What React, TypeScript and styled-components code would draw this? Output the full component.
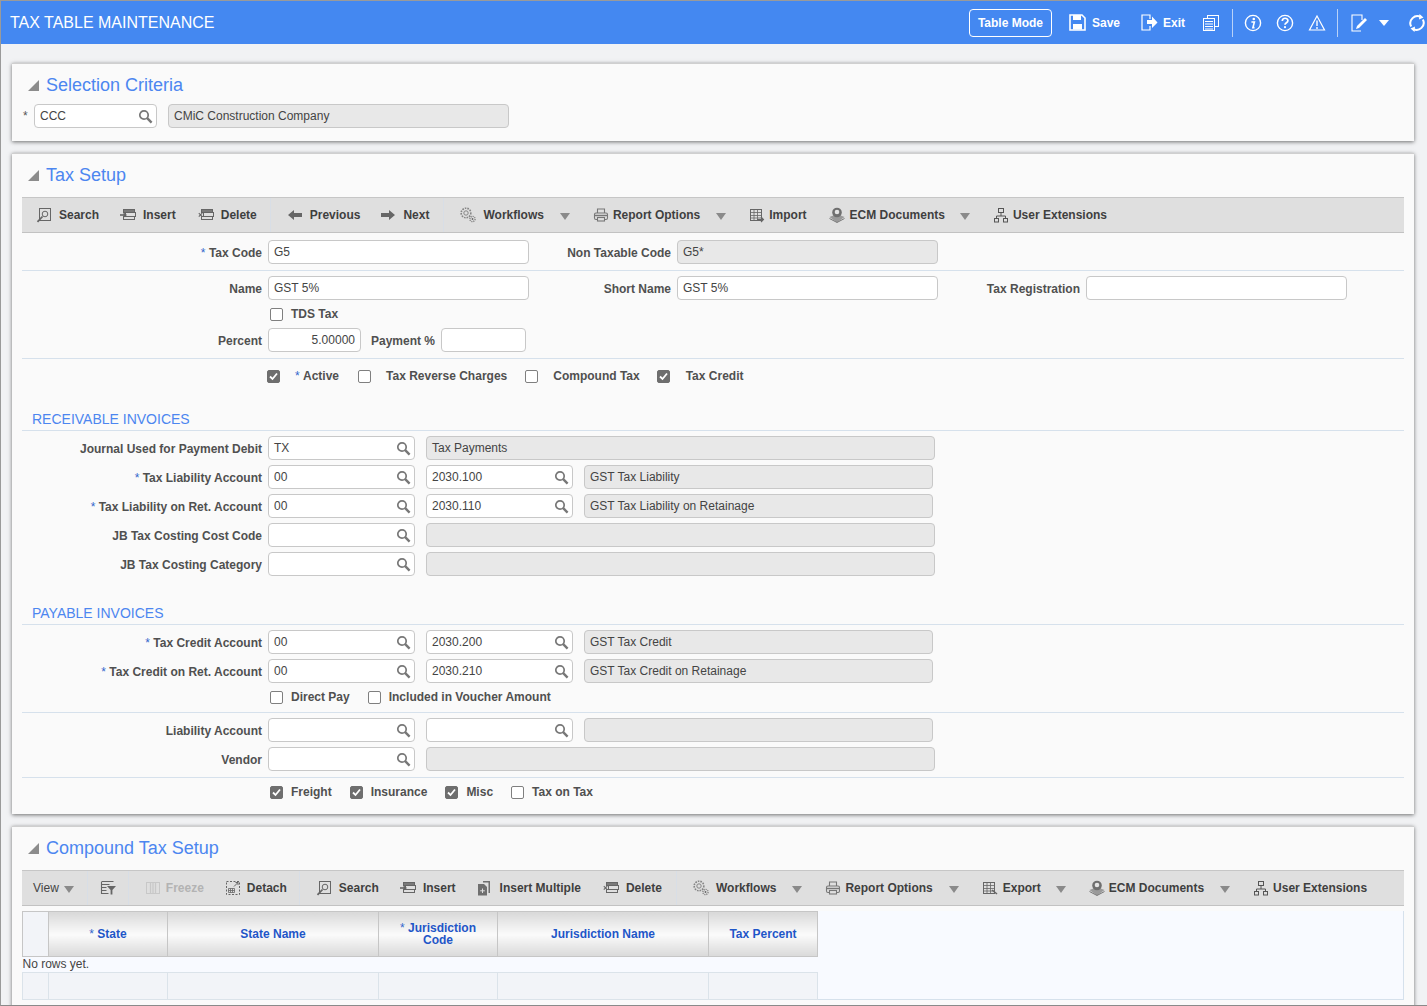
import React from "react";
import styled, { createGlobalStyle } from "styled-components";

const Global = createGlobalStyle`
  html, body { margin: 0; padding: 0; background: #f1f2f4; }
  body { font-family: "Liberation Sans", Arial, sans-serif; font-size: 12px; color: #333; }
`;

const Frame = styled.div`
  box-sizing: border-box;
  width: 1427px;
  height: 1006px;
  overflow: hidden;
  border-top: 1px solid #9a9a9a;
  border-left: 1px solid #9a9a9a;
  border-bottom: 1px solid #8a8a8a;
  background: #f1f2f4;
`;

const TopBar = styled.header`
  height: 43px;
  background: #4488f1;
  display: flex;
  align-items: center;
  color: #fff;
  padding: 0 1px 0 9px;
`;
const AppTitle = styled.h1`
  margin: 0;
  font-size: 16px;
  font-weight: 400;
  flex: 1;
`;
const TopActions = styled.div`
  display: flex;
  align-items: center;
  flex: none;
  height: 100%;
`;
const ModeButton = styled.button`
  box-sizing: border-box;
  width: 83px;
  height: 28px;
  margin-right: 17px;
  padding: 0;
  background: transparent;
  border: 1px solid #fff;
  border-radius: 4px;
  color: #fff;
  font: 700 12px "Liberation Sans", Arial, sans-serif;
`;
const TopAction = styled.span<{ $mr: number; $gap: number }>`
  display: flex;
  align-items: center;
  gap: ${(p) => p.$gap}px;
  margin-right: ${(p) => p.$mr}px;
  font-weight: 700;
  color: #fff;
`;
const TopIcon = styled.svg<{ $mr: number }>`
  flex: none;
  width: 18px;
  height: 18px;
  margin-right: ${(p) => p.$mr}px;
`;
const TopSep = styled.span<{ $mr: number }>`
  width: 1px;
  height: 28px;
  background: #b9d2f8;
  margin-right: ${(p) => p.$mr}px;
`;
const TopCaret = styled.span`
  width: 0;
  height: 0;
  margin: 0 19px 0 11px;
  border-left: 5px solid transparent;
  border-right: 5px solid transparent;
  border-top: 6px solid #fff;
`;

const Content = styled.main`
  padding: 19px 13px 0 11px;
  display: flex;
  flex-direction: column;
  gap: 12px;
`;
const Card = styled.section`
  background: #fafafa;
  border-top: 1px solid #cfcfcf;
  box-shadow: 0 1px 4px rgba(0, 0, 0, 0.55);
  padding: 9px 10px 0;
`;
const CardTitle = styled.h2`
  margin: 0;
  height: 24px;
  display: flex;
  align-items: center;
  gap: 7px;
  padding-left: 6px;
  font-size: 18px;
  font-weight: 400;
  color: #4c86f0;
`;
const Disclosure = styled.span`
  width: 0;
  height: 0;
  border-left: 11px solid transparent;
  border-bottom: 11px solid #8c8c8c;
`;
const Body1 = styled.div`
  padding-bottom: 13px;
`;
const Body2 = styled.div`
  padding-bottom: 14px;
`;
const Body3 = styled.div`
  padding-bottom: 30px;
`;

const Toolbar = styled.div<{ $pl?: number }>`
  box-sizing: border-box;
  height: 36px;
  margin-top: 10px;
  background: #dfdfdf;
  border-top: 1px solid #c6c6c6;
  border-bottom: 1px solid #c2c2c2;
  display: flex;
  align-items: center;
  padding-left: ${(p) => p.$pl ?? 3}px;
`;
const ToolButton = styled.span<{ $gap?: number; $off?: boolean; $pr?: number }>`
  display: flex;
  align-items: center;
  gap: ${(p) => p.$gap ?? 7}px;
  padding: 0 ${(p) => p.$pr ?? 11}px 0 11px;
  font-weight: 700;
  white-space: nowrap;
  color: ${(p) => (p.$off ? "#b3b3b3" : "#3f3f3f")};
`;
const ToolSep = styled.span<{ $ml?: number; $mr?: number }>`
  width: 1px;
  height: 34px;
  margin: 0 ${(p) => p.$mr ?? 5}px 0 ${(p) => p.$ml ?? 4}px;
  background: #d8dee6;
`;
const ToolCaret = styled.span`
  width: 0;
  height: 0;
  margin: 2px 12px 0 5px;
  border-left: 5px solid transparent;
  border-right: 5px solid transparent;
  border-top: 7px solid #8a8a8a;
`;
const ToolSvg = styled.svg`
  flex: none;
  width: 16px;
  height: 16px;
`;

const Row = styled.div<{ $mt?: number }>`
  display: flex;
  align-items: center;
  height: 24px;
  margin-top: ${(p) => p.$mt ?? 5}px;
`;
const CheckRow = styled.div<{ $mt?: number; $pl: number; $h?: number }>`
  display: flex;
  align-items: center;
  height: ${(p) => p.$h ?? 16}px;
  margin-top: ${(p) => p.$mt ?? 6}px;
  padding-left: ${(p) => p.$pl}px;
`;
const Label = styled.label<{ $w: number }>`
  box-sizing: border-box;
  flex: none;
  width: ${(p) => p.$w}px;
  padding: 1px 6px 0 0;
  text-align: right;
  font-weight: 700;
  color: #505050;
  white-space: nowrap;
`;
const Req = styled.span`
  color: #3366cc;
  font-weight: 400;
`;
const Star = styled.span`
  flex: none;
  width: 11px;
  margin-left: 1px;
  text-align: left;
  color: #555;
`;
const Input = styled.div<{ $w: number; $right?: boolean; $off?: boolean; $ml?: number }>`
  box-sizing: border-box;
  flex: none;
  width: ${(p) => p.$w}px;
  height: 24px;
  margin-left: ${(p) => p.$ml ?? 0}px;
  padding: 0 5px;
  display: flex;
  align-items: center;
  justify-content: ${(p) => (p.$right ? "flex-end" : "space-between")};
  background: ${(p) => (p.$off ? "#e8e8e8" : "#fff")};
  border: 1px solid #c8c8c8;
  border-radius: 4px;
  color: #444;
`;
const Lens = styled.svg`
  flex: none;
  width: 15px;
  height: 15px;
  margin-right: -2px;
`;
const CheckGroup = styled.label<{ $mr: number; $gap?: number }>`
  display: flex;
  align-items: center;
  gap: ${(p) => p.$gap ?? 8}px;
  margin-right: ${(p) => p.$mr}px;
  font-weight: 700;
  color: #505050;
  white-space: nowrap;
`;
const Box = styled.span<{ $on?: boolean }>`
  box-sizing: border-box;
  flex: none;
  width: 13px;
  height: 13px;
  display: flex;
  align-items: center;
  justify-content: center;
  border: 1px solid ${(p) => (p.$on ? "#6e6e6e" : "#7f7f7f")};
  border-radius: 2px;
  background: ${(p) => (p.$on ? "#6e6e6e" : "#fff")};
`;
const Divider = styled.div<{ $mt: number }>`
  height: 1px;
  margin-top: ${(p) => p.$mt}px;
  background: #d6e1ec;
`;
const SectionHead = styled.h3<{ $mt: number }>`
  box-sizing: content-box;
  margin: ${(p) => p.$mt}px 0 0;
  height: 22px;
  line-height: 22px;
  padding-left: 10px;
  border-bottom: 1px solid #d6e1ec;
  font-size: 14px;
  font-weight: 400;
  color: #4c86f0;
`;

const GridPanel = styled.div`
  margin-top: 5px;
  height: 88px;
  background: #f8faff;
  border-right: 1px solid #d6e1ec;
  border-bottom: 1px solid #d6e1ec;
`;
const Table = styled.table`
  table-layout: fixed;
  width: 795px;
  border-collapse: collapse;
`;
const Th = styled.th<{ $w: number }>`
  width: ${(p) => p.$w}px;
  height: 45px;
  padding: 0 12px;
  box-sizing: border-box;
  border: 1px solid #c6c6c6;
  background: linear-gradient(#d9d9d9, #fbfbfb 50%, #d9d9d9);
  color: #1f56c8;
  font-size: 12px;
  line-height: 12px;
  font-weight: 700;
  text-align: center;
`;
const CornerTh = styled(Th)`
  background: #f2f4f8;
`;
const NoRows = styled.td`
  height: 15px;
  padding: 0;
  line-height: 15px;
  color: #444;
`;
const Td = styled.td`
  height: 26px;
  padding: 0;
  background: #f2f4f8;
  border: 1px solid #dbe3ea;
`;
const ViewLabel = styled.span`
  padding-left: 10px;
  color: #444;
`;
const IconOnly = styled.span`
  display: flex;
  padding: 0 12px;
`;

const S = "#666";
const paths: Record<string, React.ReactNode> = {
  search: (
    <g fill="none" stroke={S}>
      <rect x="3.5" y="1.5" width="11" height="12" />
      <circle cx="9" cy="7" r="2.8" />
      <path d="M6.5 9.5 1.5 14.8" strokeWidth="1.8" />
    </g>
  ),
  insert: (
    <g fill="none" stroke={S}>
      <rect x="3.5" y="2.5" width="11" height="3" fill="#7a7a7a" />
      <rect x="5.5" y="5.5" width="10" height="4" />
      <rect x="3.5" y="9.5" width="11" height="3" />
      <path d="M0 8h5" strokeWidth="1.6" />
      <path d="M3.5 5.2 7 8l-3.5 2.8z" fill={S} stroke="none" />
    </g>
  ),
  del: (
    <g fill="none" stroke={S}>
      <rect x="3.5" y="2.5" width="11" height="3" fill="#7a7a7a" />
      <rect x="5.5" y="5.5" width="10" height="4" />
      <rect x="3.5" y="9.5" width="11" height="3" />
      <path d="m.8 6.2 3.4 3.4m0-3.4L.8 9.6" strokeWidth="1.1" />
    </g>
  ),
  prev: <path d="M1 8 7 3v3h8v4H7v3z" fill={S} />,
  next: <path d="M15 8 9 3v3H1v4h8v3z" fill={S} />,
  gears: (
    <g fill="none" stroke="#858585">
      <circle cx="6" cy="6" r="4.8" strokeWidth="1.6" strokeDasharray="1.6 1" />
      <circle cx="6" cy="6" r="2.2" />
      <circle cx="12.5" cy="12" r="2.6" strokeWidth="1.4" strokeDasharray="1.2 .8" />
      <circle cx="12.5" cy="12" r=".9" fill={S} stroke="none" />
    </g>
  ),
  print: (
    <g fill="none" stroke="#777" strokeWidth="1.1">
      <path d="M4.5 6V2h7v4" />
      <rect x="1.5" y="6" width="13" height="6.5" rx="1.5" />
      <path d="M2 8.5h12" strokeWidth="1.4" />
      <rect x="4.5" y="10.5" width="7" height="3.5" fill="#dfdfdf" />
    </g>
  ),
  importT: (
    <g fill="none" stroke={S}>
      <rect x="1.5" y="2.5" width="11" height="11" />
      <path d="M1.5 5.5h11M1.5 8.5h11M1.5 11h11M5 3v10M8.5 3v10" strokeWidth=".8" />
      <path d="M8 12.5h6M12 10l2.5 2.5L12 15" strokeWidth="1.1" />
    </g>
  ),
  ecm: (
    <g>
      <path d="M.5 10 8 7l7.5 3L8 15.5z" fill="#9a9a9a" />
      <path d="M.5 11.5 8 15.5l7.5-4" fill="none" stroke="#777" />
      <circle cx="8" cy="5.5" r="4.8" fill="#6f6f6f" />
      <circle cx="8" cy="5" r="2.3" fill="#e3e3e3" />
    </g>
  ),
  org: (
    <g fill="none" stroke="#555">
      <rect x="5.5" y="1.5" width="5" height="4" />
      <rect x="1.5" y="11.5" width="4" height="3.5" />
      <rect x="10.5" y="11.5" width="4" height="3.5" />
      <path d="M8 5.5V9M3.5 11.5V9h9v2.5" />
    </g>
  ),
  filter: (
    <g fill="none" stroke={S}>
      <path d="M1.5 1.5h12M1.5 4.5h8M1.5 7.5h5M1.5 10.5h5M1.5 13.5h7M1.5 2v12" strokeWidth="1.1" />
      <path d="M7 6h9l-3.6 4v4.5h-1.8V10z" fill={S} stroke="none" />
    </g>
  ),
  freeze: (
    <g fill="none" stroke="#c8c8c8">
      <rect x="1.5" y="2.5" width="13" height="11" />
      <path d="M5.5 3v10M8 3v10M10.5 3v10" strokeWidth="1.3" />
    </g>
  ),
  detach: (
    <g fill="none" stroke={S}>
      <rect x="1.5" y="1.5" width="13" height="13" strokeDasharray="2 1.5" />
      <path d="M9 6.5 13 2.5M10.5 2.5H13V5" />
      <path d="M3.5 8.5h6v4h-6zM3.5 10.5h6M5.5 8.5v4M7.5 8.5v4" strokeWidth=".8" />
    </g>
  ),
  multi: (
    <g>
      <path d="M6 1h7v12h-1.5V2.5H6z" fill="#6f6f6f" />
      <path d="M1 4h6l3 3v8.5H1z" fill="#6f6f6f" />
      <path d="M5.5 8.5v4.5M3.2 10.8h4.6" stroke="#dfdfdf" />
    </g>
  ),
  exportT: (
    <g fill="none" stroke={S}>
      <rect x="1.5" y="2.5" width="11" height="11" />
      <path d="M1.5 5.5h11M1.5 8.5h11M1.5 11h11M5 3v10M8.5 3v10" strokeWidth=".8" />
      <path d="m10 10 5 4" strokeWidth="1.6" />
    </g>
  ),
};

const Ico = ({ n }: { n: string }) => <ToolSvg viewBox="0 0 16 16">{paths[n]}</ToolSvg>;

type Item =
  | { t: string; i: string; g?: number; off?: boolean; pr?: number }
  | "sep"
  | "caret";

const ToolItems = ({ items }: { items: Item[] }) => (
  <>
    {items.map((it, k) => {
      if (it === "sep") return <ToolSep key={k} />;
      if (it === "caret") return <ToolCaret key={k} />;
      return (
        <ToolButton key={k} $gap={it.g} $off={it.off} $pr={it.pr}>
          <Ico n={it.i} />
          {it.t}
        </ToolButton>
      );
    })}
  </>
);

const LensIcon = () => (
  <Lens viewBox="0 0 15 15">
    <circle cx="6" cy="6" r="4.2" fill="none" stroke="#777" strokeWidth="1.7" />
    <path d="m9.2 9.2 4.4 4.4" stroke="#777" strokeWidth="2.4" />
  </Lens>
);
const Lookup = ({ v, w = 147, ml }: { v?: string; w?: number; ml?: number }) => (
  <Input $w={w} $ml={ml}>
    <span>{v}</span>
    <LensIcon />
  </Input>
);
const Check = ({ on }: { on?: boolean }) => (
  <Box $on={on}>
    {on && (
      <svg width="9" height="9" viewBox="0 0 9 9">
        <path d="M1 4.5 3.5 7 8 1.5" fill="none" stroke="#fff" strokeWidth="1.8" />
      </svg>
    )}
  </Box>
);
const Lbl = ({ w, req, children }: { w: number; req?: boolean; children: React.ReactNode }) => (
  <Label $w={w}>
    {req && <Req>* </Req>}
    {children}
  </Label>
);

const bar1: Item[] = [
  { t: "Search", i: "search", pr: 10 },
  { t: "Insert", i: "insert" },
  { t: "Delete", i: "del", pr: 9 },
  "sep",
  { t: "Previous", i: "prev", pr: 9 },
  { t: "Next", i: "next", pr: 10 },
  "sep",
  { t: "Workflows", i: "gears" },
  "caret",
  { t: "Report Options", i: "print", g: 4 },
  "caret",
  { t: "Import", i: "importT", g: 4 },
  { t: "ECM Documents", i: "ecm", g: 5, pr: 10 },
  "caret",
  { t: "User Extensions", i: "org", g: 4 },
];
const bar2: Item[] = [
  { t: "Freeze", i: "freeze", off: true, g: 5, pr: 10 },
  { t: "Detach", i: "detach", g: 6, pr: 8 },
  "sep",
  { t: "Search", i: "search", pr: 10 },
  { t: "Insert", i: "insert", pr: 10 },
  { t: "Insert Multiple", i: "multi" },
  { t: "Delete", i: "del", pr: 10 },
  "sep",
  { t: "Workflows", i: "gears" },
  "caret",
  { t: "Report Options", i: "print", g: 4 },
  "caret",
  { t: "Export", i: "exportT", g: 5, pr: 10 },
  "caret",
  { t: "ECM Documents", i: "ecm", g: 4 },
  "caret",
  { t: "User Extensions", i: "org", g: 4 },
];

export default function App() {
  return (
    <Frame>
      <Global />
      <TopBar>
        <AppTitle>TAX TABLE MAINTENANCE</AppTitle>
        <TopActions>
          <ModeButton>Table Mode</ModeButton>
          <TopAction $mr={21} $gap={6}>
            <svg width="17" height="17" viewBox="0 0 17 17">
              <path d="M1 1h12l3 3v12H1z" fill="none" stroke="#fff" strokeWidth="1.6" />
              <rect x="4" y="1" width="8" height="5" fill="#fff" />
              <rect x="4" y="10" width="9" height="5.5" fill="#fff" />
            </svg>
            Save
          </TopAction>
          <TopAction $mr={17} $gap={5}>
            <svg width="17" height="17" viewBox="0 0 17 17">
              <path d="M9 5V1H1v15h8v-4" fill="none" stroke="#fff" strokeWidth="1.2" />
              <path d="M6 6h5V2.5L16.5 8.5 11 14v-4H6z" fill="#fff" />
            </svg>
            Exit
          </TopAction>
          <TopIcon $mr={12} viewBox="0 0 18 18">
            <rect x="5.5" y="1.5" width="11" height="11" fill="none" stroke="#fff" />
            <rect x="1.5" y="4.5" width="11" height="12" fill="#4488f1" stroke="#fff" />
            <path d="M3 7.5h8M3 10h8M3 12.5h8M3 15h8" stroke="#fff" />
          </TopIcon>
          <TopSep $mr={11} />
          <TopIcon $mr={14} viewBox="0 0 18 18">
            <circle cx="9" cy="9" r="7.6" fill="none" stroke="#fff" strokeWidth="1.4" />
            <circle cx="9.8" cy="5" r="1.3" fill="#fff" />
            <path d="M7.4 8h3l-1.5 5.6h1.6" fill="none" stroke="#fff" strokeWidth="1.6" />
          </TopIcon>
          <TopIcon $mr={14} viewBox="0 0 18 18">
            <circle cx="9" cy="9" r="7.6" fill="none" stroke="#fff" strokeWidth="1.4" />
            <path d="M6.3 7c0-3.6 5.6-3.6 5.6-.2 0 2-2.9 2-2.9 4" fill="none" stroke="#fff" strokeWidth="1.7" />
            <circle cx="9" cy="13.2" r="1.1" fill="#fff" />
          </TopIcon>
          <TopIcon $mr={11} viewBox="0 0 18 18">
            <path d="M9 2 16.5 16h-15z" fill="none" stroke="#fff" strokeWidth="1.2" />
            <path d="M9 6.5V12" stroke="#fff" strokeWidth="1.4" />
            <circle cx="9" cy="14" r=".9" fill="#fff" />
          </TopIcon>
          <TopSep $mr={12} />
          <TopIcon $mr={0} viewBox="0 0 18 18">
            <path d="M12 6V1H2v16h9" fill="none" stroke="#fff" strokeWidth="1.1" />
            <path d="m6 15 1-3 8-8 2 2-8 8z" fill="#fff" />
          </TopIcon>
          <TopCaret />
          <TopIcon $mr={0} viewBox="0 0 18 18">
            <path d="M3.2 12.5A7 7 0 0 1 13 3.2" fill="none" stroke="#fff" strokeWidth="2" />
            <path d="M14.8 5.5A7 7 0 0 1 5 14.8" fill="none" stroke="#fff" strokeWidth="2" />
            <path d="m11.5 0 4 3.5-4.5 2zM6.5 18l-4-3.5 4.5-2z" fill="#fff" />
          </TopIcon>
        </TopActions>
      </TopBar>

      <Content>
        <Card>
          <CardTitle>
            <Disclosure />
            Selection Criteria
          </CardTitle>
          <Body1>
            <Row $mt={7}>
              <Star>*</Star>
              <Lookup v="CCC" w={123} />
              <Input $w={341} $off $ml={11}>
                CMiC Construction Company
              </Input>
            </Row>
          </Body1>
        </Card>

        <Card>
          <CardTitle>
            <Disclosure />
            Tax Setup
          </CardTitle>
          <Toolbar>
            <ToolItems items={bar1} />
          </Toolbar>
          <Body2>
            <Row $mt={7}>
              <Lbl w={246} req>Tax Code</Lbl>
              <Input $w={261}>G5</Input>
              <Lbl w={148}>Non Taxable Code</Lbl>
              <Input $w={261} $off>G5*</Input>
            </Row>
            <Divider $mt={6} />
            <Row>
              <Lbl w={246}>Name</Lbl>
              <Input $w={261}>GST 5%</Input>
              <Lbl w={148}>Short Name</Lbl>
              <Input $w={261}>GST 5%</Input>
              <Lbl w={148}>Tax Registration</Lbl>
              <Input $w={261} />
            </Row>
            <CheckRow $pl={248}>
              <CheckGroup $mr={0}>
                <Check />
                TDS Tax
              </CheckGroup>
            </CheckRow>
            <Row $mt={6}>
              <Lbl w={246}>Percent</Lbl>
              <Input $w={93} $right>5.00000</Input>
              <Lbl w={80}>Payment %</Lbl>
              <Input $w={85} />
            </Row>
            <Divider $mt={6} />
            <CheckRow $pl={245} $mt={5} $h={24}>
              <CheckGroup $mr={19} $gap={15}>
                <Check on />
                <span><Req>* </Req>Active</span>
              </CheckGroup>
              <CheckGroup $mr={18} $gap={15}>
                <Check />
                Tax Reverse Charges
              </CheckGroup>
              <CheckGroup $mr={17} $gap={15}>
                <Check />
                Compound Tax
              </CheckGroup>
              <CheckGroup $mr={0} $gap={16}>
                <Check on />
                Tax Credit
              </CheckGroup>
            </CheckRow>

            <SectionHead $mt={20}>RECEIVABLE INVOICES</SectionHead>
            <Row>
              <Lbl w={246}>Journal Used for Payment Debit</Lbl>
              <Lookup v="TX" />
              <Input $w={509} $off $ml={11}>Tax Payments</Input>
            </Row>
            <Row>
              <Lbl w={246} req>Tax Liability Account</Lbl>
              <Lookup v="00" />
              <Lookup v="2030.100" ml={11} />
              <Input $w={349} $off $ml={11}>GST Tax Liability</Input>
            </Row>
            <Row>
              <Lbl w={246} req>Tax Liability on Ret. Account</Lbl>
              <Lookup v="00" />
              <Lookup v="2030.110" ml={11} />
              <Input $w={349} $off $ml={11}>GST Tax Liability on Retainage</Input>
            </Row>
            <Row>
              <Lbl w={246}>JB Tax Costing Cost Code</Lbl>
              <Lookup />
              <Input $w={509} $off $ml={11} />
            </Row>
            <Row>
              <Lbl w={246}>JB Tax Costing Category</Lbl>
              <Lookup />
              <Input $w={509} $off $ml={11} />
            </Row>

            <SectionHead $mt={26}>PAYABLE INVOICES</SectionHead>
            <Row>
              <Lbl w={246} req>Tax Credit Account</Lbl>
              <Lookup v="00" />
              <Lookup v="2030.200" ml={11} />
              <Input $w={349} $off $ml={11}>GST Tax Credit</Input>
            </Row>
            <Row>
              <Lbl w={246} req>Tax Credit on Ret. Account</Lbl>
              <Lookup v="00" />
              <Lookup v="2030.210" ml={11} />
              <Input $w={349} $off $ml={11}>GST Tax Credit on Retainage</Input>
            </Row>
            <CheckRow $pl={248}>
              <CheckGroup $mr={18}>
                <Check />
                Direct Pay
              </CheckGroup>
              <CheckGroup $mr={0}>
                <Check />
                Included in Voucher Amount
              </CheckGroup>
            </CheckRow>
            <Divider $mt={7} />
            <Row>
              <Lbl w={246}>Liability Account</Lbl>
              <Lookup />
              <Lookup ml={11} />
              <Input $w={349} $off $ml={11} />
            </Row>
            <Row>
              <Lbl w={246}>Vendor</Lbl>
              <Lookup />
              <Input $w={509} $off $ml={11} />
            </Row>
            <Divider $mt={6} />
            <CheckRow $pl={248}>
              <CheckGroup $mr={18}>
                <Check on />
                Freight
              </CheckGroup>
              <CheckGroup $mr={18}>
                <Check on />
                Insurance
              </CheckGroup>
              <CheckGroup $mr={18}>
                <Check on />
                Misc
              </CheckGroup>
              <CheckGroup $mr={0}>
                <Check />
                Tax on Tax
              </CheckGroup>
            </CheckRow>
          </Body2>
        </Card>

        <Card>
          <CardTitle>
            <Disclosure />
            Compound Tax Setup
          </CardTitle>
          <Toolbar $pl={1}>
            <ViewLabel>View</ViewLabel>
            <ToolCaret />
            <ToolSep $ml={1} $mr={0} />
            <IconOnly>
              <Ico n="filter" />
            </IconOnly>
            <ToolSep $ml={0} $mr={5} />
            <ToolItems items={bar2} />
          </Toolbar>
          <Body3>
            <GridPanel>
              <Table>
                <thead>
                  <tr>
                    <CornerTh $w={26} />
                    <Th $w={119}><Req>* </Req>State</Th>
                    <Th $w={211}>State Name</Th>
                    <Th $w={119}><Req>* </Req>Jurisdiction Code</Th>
                    <Th $w={211}>Jurisdiction Name</Th>
                    <Th $w={109}>Tax Percent</Th>
                  </tr>
                </thead>
                <tbody>
                  <tr>
                    <NoRows colSpan={6}>No rows yet.</NoRows>
                  </tr>
                  <tr>
                    <Td /><Td /><Td /><Td /><Td /><Td />
                  </tr>
                </tbody>
              </Table>
            </GridPanel>
          </Body3>
        </Card>
      </Content>
    </Frame>
  );
}
